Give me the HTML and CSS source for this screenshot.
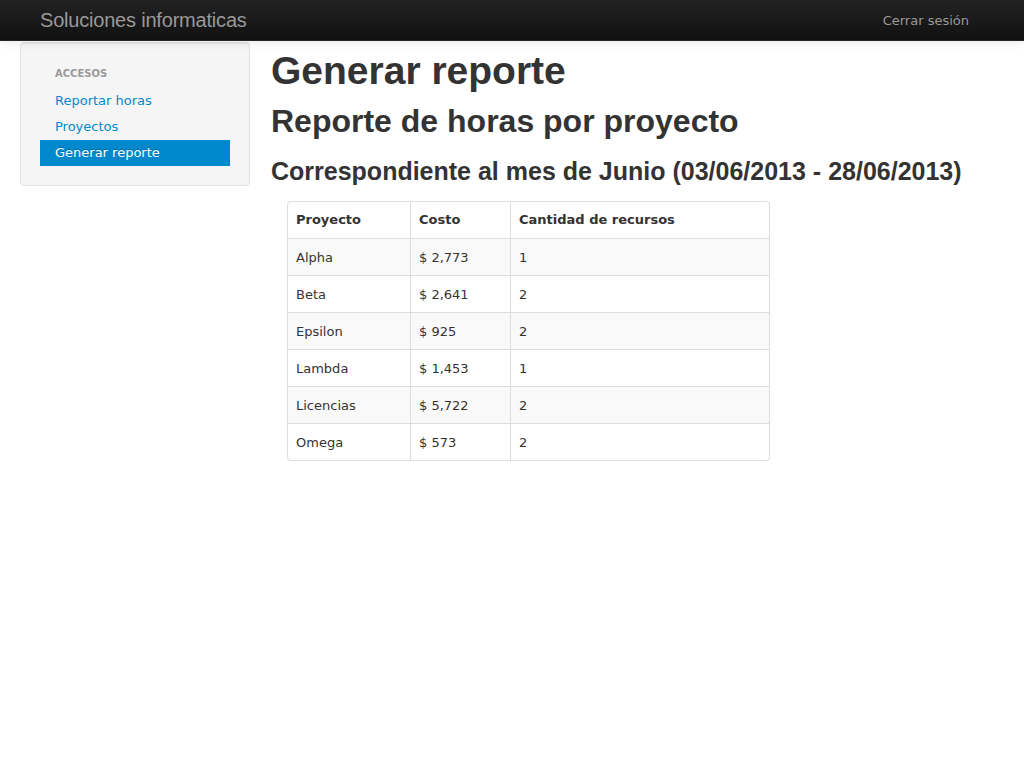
FILE: index.html
```html
<!DOCTYPE html>
<html lang="es">
<head>
<meta charset="utf-8">
<title>Generar reporte</title>
<link rel="stylesheet" href="styles.css">
</head>
<body>
<header class="navbar">
  <div class="navbar-inner">
    <a class="brand" href="#">Soluciones informaticas</a>
    <a class="nav-link" href="#">Cerrar sesión</a>
  </div>
</header>
<div class="page">
  <aside class="sidebar">
    <ul class="nav-list">
      <li class="nav-header">Accesos</li>
      <li><a href="#">Reportar horas</a></li>
      <li><a href="#">Proyectos</a></li>
      <li class="active"><a href="#">Generar reporte</a></li>
    </ul>
  </aside>
  <main class="content">
    <h1>Generar reporte</h1>
    <h2>Reporte de horas por proyecto</h2>
    <h3>Correspondiente al mes de Junio (03/06/2013 - 28/06/2013)</h3>
    <table class="report">
      <thead>
        <tr><th class="c1">Proyecto</th><th class="c2">Costo</th><th class="c3">Cantidad de recursos</th></tr>
      </thead>
      <tbody>
        <tr><td>Alpha</td><td>$ 2,773</td><td>1</td></tr>
        <tr><td>Beta</td><td>$ 2,641</td><td>2</td></tr>
        <tr><td>Epsilon</td><td>$ 925</td><td>2</td></tr>
        <tr><td>Lambda</td><td>$ 1,453</td><td>1</td></tr>
        <tr><td>Licencias</td><td>$ 5,722</td><td>2</td></tr>
        <tr><td>Omega</td><td>$ 573</td><td>2</td></tr>
      </tbody>
    </table>
  </main>
</div>
</body>
</html>
```
FILE: styles.css
```css
* { box-sizing: border-box; }
html, body { margin: 0; padding: 0; }
body {
  font-family: "DejaVu Sans", Verdana, sans-serif;
  font-size: 13px;
  line-height: 20px;
  color: #333;
  background: #fff;
}
a { text-decoration: none; color: #0088cc; }

.navbar {
  background: linear-gradient(#222222, #111111);
  border-bottom: 1px solid #252525;
  box-shadow: 0 1px 10px rgba(0,0,0,0.1);
  position: relative;
  z-index: 2;
}
.navbar-inner {
  height: 40px;
  padding: 0 40px;
  display: flex;
  align-items: center;
  justify-content: space-between;
}
.brand {
  font-family: "Liberation Sans", Arial, sans-serif;
  font-size: 20px;
  line-height: 20px;
  color: #999;
  letter-spacing: -0.2px;
}
.nav-link {
  color: #999;
  padding: 11px 15px 9px;
}

.page {
  display: flex;
  align-items: flex-start;
  padding: 0 20px;
  gap: 21px;
}
.sidebar {
  width: 230px;
  flex: none;
  margin-top: 1px;
  background: #f5f5f5;
  border: 1px solid #e3e3e3;
  border-radius: 4px;
  box-shadow: inset 0 1px 1px rgba(0,0,0,0.05);
  padding: 19px 0;
}
.nav-list {
  list-style: none;
  margin: 0;
  padding: 0 19px;
}
.nav-header {
  font-size: 10px;
  font-weight: bold;
  text-transform: uppercase;
  color: #999;
  text-shadow: 0 1px 0 rgba(255,255,255,0.5);
  padding: 2px 15px 4px;
  line-height: 20px;
}
.nav-list a {
  display: block;
  padding: 3px 15px;
  color: #0088cc;
  text-shadow: 0 1px 0 rgba(255,255,255,0.5);
}
.nav-list .active a {
  background: #0088cc;
  color: #fff;
  text-shadow: 0 -1px 0 rgba(0,0,0,0.2);
}

.content {
  flex: 1;
}
h1, h2, h3 {
  font-family: "Liberation Sans", Arial, sans-serif;
  font-weight: bold;
  line-height: 40px;
  margin: 10px 0;
  color: #333;
}
h1 { font-size: 39px; }
h2 { font-size: 32px; }
h3 { font-size: 25px; }

.report {
  margin: 10px 0 0 16px;
  width: 483px;
  border: 1px solid #ddd;
  border-left: 0;
  border-collapse: separate;
  border-spacing: 0;
  border-radius: 4px;
}
.report th, .report td {
  padding: 9px 8px 7px;
  line-height: 20px;
  text-align: left;
  vertical-align: top;
  border-left: 1px solid #ddd;
  border-top: 1px solid #ddd;
}
.report thead th { border-top: 0; font-weight: bold; padding-top: 8px; padding-bottom: 8px; }
.report tbody tr:nth-child(odd) td { background: #f9f9f9; }
.report .c1 { width: 123px; }
.report .c2 { width: 100px; }
.report thead th.c1 { border-top-left-radius: 4px; }
.report tbody tr:last-child td:first-child { border-bottom-left-radius: 4px; }
```
